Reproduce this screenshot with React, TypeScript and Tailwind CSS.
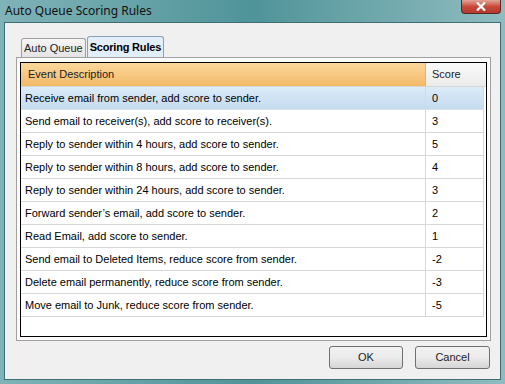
const rules: [string, string][] = [
  ['Receive email from sender, add score to sender.', '0'],
  ['Send email to receiver(s), add score to receiver(s).', '3'],
  ['Reply to sender within 4 hours, add score to sender.', '5'],
  ['Reply to sender within 8 hours, add score to sender.', '4'],
  ['Reply to sender within 24 hours, add score to sender.', '3'],
  ['Forward sender\u2019s email, add score to sender.', '2'],
  ['Read Email, add score to sender.', '1'],
  ['Send email to Deleted Items, reduce score from sender.', '-2'],
  ['Delete email permanently, reduce score from sender.', '-3'],
  ['Move email to Junk, reduce score from sender.', '-5'],
];

export default function App() {
  return (
    <div
      className="w-[505px] h-[384px] flex flex-col bg-gradient-to-r from-[#7fb3b8] via-[#4f9499] to-[#8fbcc0] px-[4px] pb-[4px] text-[11px] text-black"
      style={{ fontFamily: '"Liberation Sans", Arial, sans-serif' }}
    >
      {/* title bar */}
      <div className="h-[22px] flex items-start justify-between">
        <span
          className="pl-[1px] pt-[2px] text-[12px] text-[#111]"
          style={{ fontFamily: '"Noto Sans", "Open Sans", sans-serif' }}
        >
          Auto Queue Scoring Rules
        </span>
        <div className="w-[40px] h-[14px] rounded-b-[4px] border border-[#5a2a22] border-t-0 bg-gradient-to-b from-[#e0a59a] via-[#c8483a] to-[#b33a2d] flex items-center justify-center">
          <svg width="10" height="9" viewBox="0 0 10 9">
            <path d="M1 0.5 L9 8.5 M9 0.5 L1 8.5" stroke="#fff" strokeWidth="2.2" />
          </svg>
        </div>
      </div>

      {/* client */}
      <div className="flex-1 flex flex-col bg-[#f0f0f0] border border-[#3f6e72] pl-[11px] pr-[9px] pt-[13px]">
        {/* tabs */}
        <div className="flex items-end h-[21px] pl-[5px]">
          <div className="h-[19px] px-[2px] border border-[#a0a0a0] border-b-0 rounded-t-[3px] bg-gradient-to-b from-[#f6f6f6] to-[#e4e4e4] flex items-center text-[#222]">
            Auto Queue
          </div>
          <div className="h-[21px] ml-[1px] px-[2px] border border-[#8aa0b8] border-b-0 rounded-t-[3px] bg-[#e3eefb] flex items-center font-bold tracking-[-0.2px]">
            Scoring Rules
          </div>
        </div>

        {/* panel */}
        <div className="h-[284px] border border-[#a0a0a0] bg-[#fbfbfb] px-[3px] pt-[4px] pb-[3px]">
          <div className="h-full border-[1.5px] border-black bg-white flex flex-col">
            <div className="flex h-[24px] border-b border-[#d5d5d5]">
              <div className="w-[405px] pl-[7px] flex items-center bg-gradient-to-b from-[#fbd89c] to-[#f3b967] border-r border-[#e0b070] text-[#222]">
                Event Description
              </div>
              <div className="flex-1 pl-[6px] flex items-center bg-gradient-to-b from-[#fafafa] to-[#ebebeb] text-[#222]">
                Score
              </div>
            </div>
            {rules.map(([desc, score], i) => (
              <div
                key={i}
                className={
                  i === 0
                    ? 'flex h-[23px] border-b border-[#d8e0e8] bg-gradient-to-b from-[#dcebf8] to-[#c4dcf0] mr-[2px]'
                    : 'flex h-[23px] border-b border-[#d8d8d8] mr-[2px]'
                }
              >
                <div className="w-[405px] pl-[4px] flex items-center border-r border-[#d8d8d8]">{desc}</div>
                <div className="flex-1 pl-[6px] flex items-center border-r border-[#d8d8d8]">{score}</div>
              </div>
            ))}
          </div>
        </div>

        {/* buttons */}
        <div className="flex justify-end gap-[12px] pt-[5px] pr-[1px]">
          <button className="w-[74px] h-[23px] rounded-[3px] border border-[#707070] bg-gradient-to-b from-[#f2f2f2] via-[#ebebeb] to-[#d6d6d6] text-[#222]">
            OK
          </button>
          <button className="w-[75px] h-[23px] rounded-[3px] border border-[#707070] bg-gradient-to-b from-[#f2f2f2] via-[#ebebeb] to-[#d6d6d6] text-[#222]">
            Cancel
          </button>
        </div>
      </div>
    </div>
  );
}
